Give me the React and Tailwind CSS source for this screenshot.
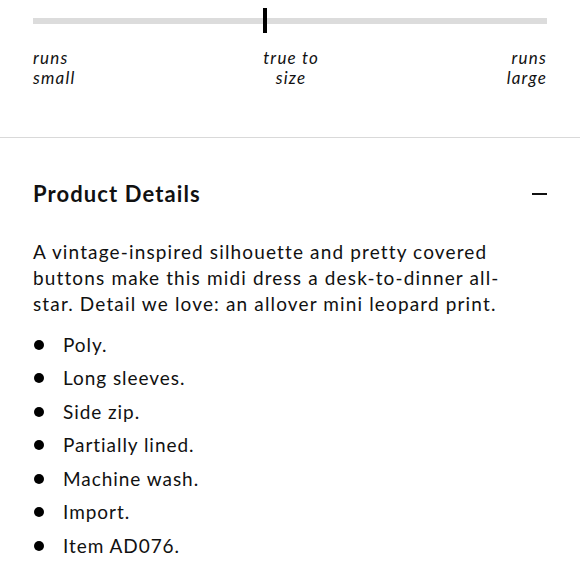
import React from 'react';

const bullets = [
  'Poly.',
  'Long sleeves.',
  'Side zip.',
  'Partially lined.',
  'Machine wash.',
  'Import.',
  'Item AD076.',
];

const FitScale = () => (
  <div className="px-[33px] pt-[8px] pb-[49px]">
    <div className="relative h-[25px]">
      <div className="absolute left-0 right-0 top-[10px] h-[6px] bg-[#dcdcdc]" />
      <div className="absolute left-[230px] top-0 w-[4px] h-[25px] bg-black" />
    </div>
    <div className="mt-[15px] flex justify-between italic text-[17px] leading-[20px] tracking-[0.07em]">
      <span>runs<br />small</span>
      <span className="text-center">true to<br />size</span>
      <span className="text-right">runs<br />large</span>
    </div>
  </div>
);

const App = () => {
  return (
    <div className="w-[580px] h-[580px] overflow-hidden bg-white text-[#111] font-['Lato',sans-serif]">
      <FitScale />
      <div className="border-t border-[#d9d9d9] px-[33px]">
        <div className="flex items-center justify-between pt-[42px]">
          <h2 className="text-[22px] leading-[28px] font-bold tracking-[0.05em]">Product Details</h2>
          <div className="w-[15px] h-[2px] bg-[#111]" />
        </div>
        <p className="mt-[31px] pr-[30px] text-[19px] leading-[26px] tracking-[0.06em]">
          A vintage-inspired silhouette and pretty covered buttons make this midi dress a desk-to-dinner all-star. Detail we love: an allover mini leopard print.
        </p>
        <ul className="mt-[11px] flex flex-col">
          {bullets.map((b) => (
            <li key={b} className="flex items-center h-[33.5px] text-[19px] tracking-[0.05em]">
              <span className="w-[10px] h-[10px] rounded-full bg-black ml-[1px] mr-[19px]" />
              {b}
            </li>
          ))}
        </ul>
      </div>
    </div>
  );
};

export default App;
